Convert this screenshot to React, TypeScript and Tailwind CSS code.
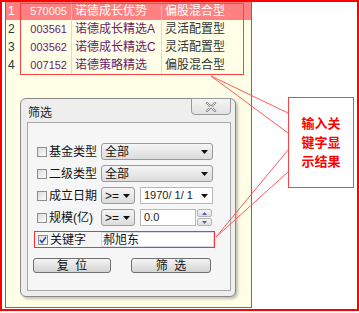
import { Fragment } from "react";

const rows = [
  { idx: "1", code: "570005", name: "诺德成长优势", type: "偏股混合型", active: true },
  { idx: "2", code: "003561", name: "诺德成长精选A", type: "灵活配置型", active: false },
  { idx: "3", code: "003562", name: "诺德成长精选C", type: "灵活配置型", active: false },
  { idx: "4", code: "007152", name: "诺德策略精选", type: "偏股混合型", active: false },
];

const font = "font-['Liberation_Sans','Noto_Sans_CJK_SC',sans-serif]";

export default function App() {
  return (
    <div className={`relative h-[313px] w-[359px] bg-white ${font} text-[12px] leading-none`}>
      <div className="flex h-[311px] w-[359px] border-2 border-[#ff0000]">
        <div className="ml-[3px] flex h-[306px] w-[247px] flex-col border-x border-b border-[#ff3030] bg-[#ffffe8]">
          <Table />
          <Dialog />
        </div>
      </div>

      {/* annotation overlays */}
      <div className="absolute left-[20px] top-[3px] h-[72px] w-[224px] border border-[#ff4040]" />
      <div className="absolute left-[288px] top-[97px] flex h-[91px] w-[66px] flex-col items-center justify-center gap-[6px] border border-[#ff4040] bg-white pb-[2px] text-[13px] font-bold text-[#ff0000] font-['Noto_Sans_CJK_SC',sans-serif]">
        <span>输入关</span>
        <span>键字显</span>
        <span>示结果</span>
      </div>
      <svg className="pointer-events-none absolute left-0 top-0" width="359" height="313">
        <g stroke="#ff5a5a" strokeWidth="1" fill="none">
          <line x1="211" y1="76" x2="288" y2="113" />
          <line x1="211" y1="76" x2="288" y2="133" />
          <line x1="216" y1="237" x2="288" y2="150" />
          <line x1="216" y1="237" x2="288" y2="172" />
        </g>
      </svg>
    </div>
  );
}

function Table() {
  return (
    <div className="flex flex-col">
      {rows.map((r) => (
        <div
          key={r.idx}
          className={`flex h-[18px] items-center ${r.active ? "bg-[#ff8080] text-white" : "text-[#6a1a6a]"}`}
        >
          <span className={`w-[15px] pl-[2px] ${r.active ? "text-white" : "text-[#333]"}`}>{r.idx}</span>
          <span className="w-[50px] pr-[4px] text-right text-[11px]">{r.code}</span>
          <span className={`flex h-full w-[90px] items-center border-l pl-[3px] ${r.active ? "border-[#ffb0b0]" : "border-[#dcdcc8]"}`}>
            {r.name}
          </span>
          <span
            className={`flex h-full w-[84px] items-center border-l pl-[3px] ${r.active ? "border-[#ffb0b0] text-white" : "border-[#dcdcc8] text-[#333]"}`}
          >
            {r.type}
          </span>
        </div>
      ))}
    </div>
  );
}

function Dialog() {
  return (
    <div className="relative ml-[14px] mt-[24px] flex h-[199px] w-[216px] flex-col rounded-[6px] border border-[#8a8a8a] bg-[#eeeeee] shadow-[2px_2px_3px_rgba(0,0,0,0.25)]">
      <div className="flex h-[23px] items-center pl-[7px] pt-[4px] text-[12px] text-[#222]">筛选</div>
      <div className="absolute right-[4px] top-[-1px] flex h-[17px] w-[40px] items-center justify-center rounded-b-[4px] border border-[#9a9a9a] bg-gradient-to-b from-[#f4f4f4] to-[#e2e2e2]">
        <svg width="12" height="10" viewBox="0 0 12 10">
          <path d="M2 1 L10 9 M10 1 L2 9" stroke="#8a8a8a" strokeWidth="2.4" strokeLinecap="round" />
          <path d="M2 1 L10 9 M10 1 L2 9" stroke="#ffffff" strokeWidth="0.8" strokeLinecap="round" />
        </svg>
      </div>
      <div className="ml-[6px] flex h-[169px] w-[204px] flex-col border border-[#a8a8a8] bg-[#f6f6f6] pl-[6px] pt-[20px]">
        <div className="flex flex-col gap-[5px]">
          <Row label="基金类型">
            <Select text="全部" width="w-[112px]" />
          </Row>
          <Row label="二级类型">
            <Select text="全部" width="w-[112px]" />
          </Row>
          <Row label="成立日期">
            <Select text=">=" width="w-[34px]" />
            <div className="ml-[5px] flex h-[17px] w-[73px] items-center justify-between border border-[#b8b8b8] bg-white pl-[3px] pr-[4px] text-[11px] text-[#222]">
              <span>1970/ 1/ 1</span>
              <Arrow />
            </div>
          </Row>
          <Row label="规模(亿)">
            <Select text=">=" width="w-[34px]" />
            <div className="ml-[5px] flex h-[17px] w-[56px] items-center border border-[#b8b8b8] bg-white pl-[3px] text-[11px] text-[#222]">0.0</div>
            <div className="ml-[1px] flex h-[17px] w-[15px] flex-col gap-[1px]">
              <Spin up />
              <Spin />
            </div>
          </Row>
          <div className="flex h-[17px] w-[181px] items-center border border-[#ff3030]">
            <div className="flex w-[66px] items-center">
              <Check checked />
              <span className="ml-[2px] text-[#111]">关键字</span>
            </div>
            <div className="flex h-[15px] flex-1 items-center border border-[#d8dce4] bg-white pl-[1px] text-[#111]">郝旭东</div>
          </div>
        </div>
        <div className="ml-[-1px] mt-[10px] flex gap-[20px]">
          <Button text="复  位" width="w-[78px]" />
          <Button text="筛  选" width="w-[80px]" />
        </div>
      </div>
    </div>
  );
}

function Row({ label, children }: { label: string; children: React.ReactNode }) {
  return (
    <div className="flex h-[17px] items-center">
      <div className="flex w-[67px] items-center">
        <Check />
        <span className="ml-[2px] text-[#111]">{label}</span>
      </div>
      <Fragment>{children}</Fragment>
    </div>
  );
}

function Check({ checked = false }: { checked?: boolean }) {
  return (
    <span className="ml-[3px] flex h-[10px] w-[10px] items-center justify-center border border-[#8e8f8f] bg-gradient-to-br from-[#dcdcdc] to-[#fbfbfb]">
      {checked && (
        <svg width="8" height="8" viewBox="0 0 8 8">
          <path d="M1 4 L3 6.5 L7 1" stroke="#2a4fa8" strokeWidth="1.6" fill="none" />
        </svg>
      )}
    </span>
  );
}

function Select({ text, width }: { text: string; width: string }) {
  return (
    <div
      className={`flex h-[17px] ${width} items-center justify-between rounded-[3px] border border-[#9a9a9a] bg-gradient-to-b from-[#f5f5f5] to-[#dcdcdc] pl-[3px] pr-[4px] text-[#111]`}
    >
      <span>{text}</span>
      <Arrow />
    </div>
  );
}

function Arrow() {
  return (
    <svg width="7" height="4" viewBox="0 0 7 4">
      <path d="M0 0 L7 0 L3.5 4 Z" fill="#111" />
    </svg>
  );
}

function Spin({ up = false }: { up?: boolean }) {
  return (
    <div className="flex h-[8px] items-center justify-center rounded-[2px] border border-[#b4b4b4] bg-gradient-to-b from-[#f4f4f4] to-[#dedede]">
      <svg width="5" height="3" viewBox="0 0 5 3">
        <path d={up ? "M0 3 L5 3 L2.5 0 Z" : "M0 0 L5 0 L2.5 3 Z"} fill="#4a6a9a" />
      </svg>
    </div>
  );
}

function Button({ text, width }: { text: string; width: string }) {
  return (
    <div
      className={`flex h-[15px] ${width} items-center justify-center whitespace-pre rounded-[3px] border border-[#707070] bg-gradient-to-b from-[#f4f4f4] to-[#d4d4d4] text-[#111]`}
    >
      {text}
    </div>
  );
}
